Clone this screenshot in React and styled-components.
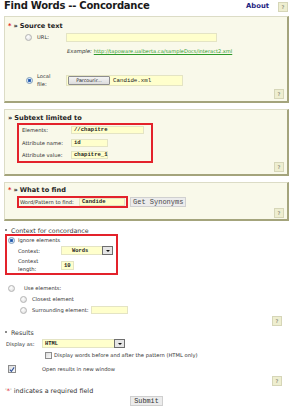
import React from 'react';
import styled, { createGlobalStyle, css } from 'styled-components';

const Global = createGlobalStyle`
  html, body { margin: 0; padding: 0; background: #fff; }
  body {
    width: 300px;
    height: 409px;
    overflow: hidden;
    font-family: "DejaVu Sans", Verdana, sans-serif;
    color: #333;
    -webkit-font-smoothing: antialiased;
  }
  * { box-sizing: border-box; }
`;

const Page = styled.div`
  width: 300px;
  display: flex;
  flex-direction: column;
`;

const Header = styled.header`
  height: 16px;
  display: flex;
  align-items: flex-start;
  padding: 0 12px 0 4px;
`;

const Title = styled.h1`
  margin: 0;
  font-size: 10px;
  line-height: 12px;
  letter-spacing: -0.25px;
  font-weight: bold;
  color: #1a1a1a;
  flex: 1;
  white-space: nowrap;
`;

const About = styled.a`
  font-size: 6.8px;
  line-height: 9px;
  margin-top: 2px;
  font-weight: bold;
  color: #1c1c7e;
  text-decoration: none;
  margin-right: 9px;
`;

const Help = styled.span`
  width: ${p => p.$size || 10}px;
  height: ${p => p.$size || 10}px;
  margin-top: ${p => p.$mt || 0}px;
  display: flex;
  align-items: center;
  justify-content: center;
  background: #eeeed0;
  border: 1px solid #d6d6b8;
  color: #9a9a88;
  font-size: 5px;
  font-weight: bold;
`;

const HelpRow = styled.div`
  display: flex;
  justify-content: flex-end;
  margin-top: ${p => p.$mt || 0}px;
  margin-bottom: ${p => p.$mb || 0}px;
  margin-right: ${p => p.$mr || 0}px;
`;

const Panel = styled.section`
  margin: ${p => p.$mt || 0}px 11px 0 4px;
  background: #f9f9ea;
  border: 1px solid #dcdcc6;
  border-right: 2px solid #a4a47c;
  border-bottom: 2px solid #a4a47c;
  padding: 0 2px 0 3px;
  display: flex;
  flex-direction: column;
`;

const Legend = styled.div`
  height: ${p => p.$h || 11}px;
  margin-top: ${p => p.$mt || 0}px;
  display: flex;
  align-items: center;
  font-size: 6.6px;
  font-weight: bold;
  color: #1e1e1e;
  white-space: nowrap;
`;

const Req = styled.span`
  color: #e02020;
  margin-right: 2px;
`;

const Chevron = styled.span`
  margin-right: 2px;
`;

const Row = styled.div`
  display: flex;
  align-items: center;
  height: ${p => p.$h}px;
  margin-top: ${p => p.$mt || 0}px;
  padding-left: ${p => p.$pl || 0}px;
  white-space: nowrap;
`;

const Label = styled.span`
  width: ${p => p.$w}px;
  flex: none;
  font-size: 5.2px;
  line-height: 8px;
  color: #333;
  white-space: ${p => (p.$wrap ? 'normal' : 'nowrap')};
`;

const Text = styled.span`
  font-size: ${p => p.$fs || 5.2}px;
  color: #333;
`;

const Input = styled.span`
  width: ${p => p.$w}px;
  height: ${p => p.$h || 8}px;
  flex: none;
  display: flex;
  align-items: center;
  padding-left: 2px;
  margin-left: ${p => p.$ml || 0}px;
  background: #ffffcc;
  border: 1px solid #e4e4c4;
  font-family: "Liberation Mono", "Courier New", monospace;
  font-weight: bold;
  font-size: 5.6px;
  color: #222;
`;

const Radio = styled.span`
  width: 7px;
  height: 7px;
  flex: none;
  border-radius: 50%;
  border: 1px solid #b4b4b4;
  background: radial-gradient(circle at 40% 35%, #ffffff 0, #e4e4e4 70%, #cfcfcf 100%);
  margin-left: ${p => p.$ml || 0}px;
  margin-right: ${p => p.$mr || 0}px;
  ${p =>
    p.$checked &&
    css`
      border-color: #7f9db9;
      background: radial-gradient(circle, #1f4f9c 0, #3d72c0 1.4px, #d6e4f6 2px, #f2f6fc 3.5px);
    `}
`;

const Check = styled.span`
  width: ${p => p.$size || 7}px;
  height: ${p => p.$size || 7}px;
  flex: none;
  border: 1px solid #8c8c8c;
  background: linear-gradient(135deg, #dcdcdc, #fbfbfb);
  margin-right: ${p => p.$mr || 0}px;
  display: flex;
  align-items: center;
  justify-content: center;
`;

const Example = styled.span`
  font-size: 5.3px;
  font-style: italic;
  color: #333;
`;

const Link = styled.a`
  font-size: 5.1px;
  color: #2f9a2a;
  text-decoration: underline;
  margin-left: 2px;
`;

const FileBox = styled.span`
  width: 117px;
  height: 11px;
  display: flex;
  align-items: center;
  background: #ffffcc;
  border: 1px solid #e4e4c4;
`;

const FileButton = styled.span`
  height: 9px;
  width: 42px;
  display: flex;
  align-items: center;
  justify-content: center;
  background: linear-gradient(#f4f4f4, #dcdcdc);
  border: 1px solid #8d8d8d;
  border-radius: 1px;
  font-size: 4.8px;
  color: #222;
  margin-left: 1px;
`;

const FileName = styled.span`
  font-family: "Liberation Mono", "Courier New", monospace;
  font-size: 5.8px;
  color: #222;
  margin-left: 3px;
`;

const RedBox = styled.div`
  border: 2px solid #e3222b;
  width: ${p => p.$w}px;
  margin-left: ${p => p.$ml || 0}px;
  margin-top: ${p => p.$mt || 0}px;
  padding: ${p => p.$pad || '0'};
  display: flex;
  flex-direction: ${p => (p.$row ? 'row' : 'column')};
  align-items: ${p => (p.$row ? 'center' : 'stretch')};
`;

const MonoButton = styled.span`
  height: 10px;
  display: flex;
  align-items: center;
  padding: 0 2px;
  margin-left: ${p => p.$ml || 0}px;
  background: #ececec;
  border: 1px solid #d0d0d0;
  font-family: "Liberation Mono", "Courier New", monospace;
  font-size: 7px;
  color: #4a4a4a;
`;

const Select = styled.span`
  width: ${p => p.$w}px;
  height: 9px;
  flex: none;
  display: flex;
  align-items: center;
  justify-content: space-between;
  background: #ffffcc;
  border: 1px solid #e4e4c4;
  font-family: "Liberation Mono", "Courier New", monospace;
  font-weight: bold;
  font-size: 5.4px;
  color: #222;
  padding-left: ${p => p.$pl || 2}px;
`;

const Arrow = styled.span`
  width: 11px;
  height: 9px;
  margin-right: -1px;
  display: flex;
  align-items: center;
  justify-content: center;
  background: #e6e6e6;
  border: 1px solid #6e6e6e;
  &::after {
    content: '';
    border-left: 2px solid transparent;
    border-right: 2px solid transparent;
    border-top: 2px solid #111;
    margin-top: 1px;
  }
`;

const SectionHead = styled.div`
  display: flex;
  align-items: center;
  height: 8px;
  margin-top: ${p => p.$mt || 0}px;
  padding-left: 5px;
  font-size: 6.3px;
  color: #3a3a3a;
`;

const Bullet = styled.span`
  width: 2px;
  height: 2px;
  background: #8a8a8a;
  margin-right: 4px;
`;

const Required = styled.div`
  height: 8px;
  margin-top: 1px;
  padding-left: 5px;
  display: flex;
  align-items: center;
  font-size: 6.4px;
  color: #333;
  white-space: pre;
`;

const Quote = styled.span`
  color: #aaa;
`;

const Star = styled.span`
  color: #e02020;
`;

const SubmitRow = styled.div`
  margin-top: 1px;
  padding-left: 130px;
  display: flex;
`;

const Submit = styled.span`
  height: 10px;
  width: 33px;
  display: flex;
  align-items: center;
  justify-content: center;
  background: #ececec;
  border: 1px solid #cfcfcf;
  font-family: "Liberation Mono", "Courier New", monospace;
  font-size: 6.8px;
  color: #333;
`;

const CheckMark = () => (
  <svg width="7" height="7" viewBox="0 0 7 7">
    <path d="M1 3.6 L2.8 5.6 L6 1" fill="none" stroke="#2c4f9a" strokeWidth="1.2" />
  </svg>
);

export default function App() {
  return (
    <Page>
      <Global />
      <Header>
        <Title>Find Words -- Concordance</Title>
        <About>About</About>
        <Help $size={10} $mt={2}>?</Help>
      </Header>

      <Panel $mt={0}>
        <Legend $mt={3} $h={11}>
          <Req>*</Req>
          <Chevron>»</Chevron>Source text
        </Legend>
        <Row $h={10} $mt={1} $pl={17}>
          <Radio $mr={5} />
          <Label $w={29}>URL:</Label>
          <Input $w={151} $h={9} />
        </Row>
        <Row $h={8} $mt={5} $pl={59}>
          <Example>Example:</Example>
          <Link>http://tapoware.ualberta.ca/sampleDocs/interact2.xml</Link>
        </Row>
        <Row $h={14} $mt={18} $pl={18}>
          <Radio $mr={4} $checked />
          <Label $w={29} $wrap>
            Local
            <br />
            file:
          </Label>
          <FileBox>
            <FileButton>Parcourir...</FileButton>
            <FileName>Candide.xml</FileName>
          </FileBox>
        </Row>
        <HelpRow $mt={2} $mb={2} $mr={1}>
          <Help>?</Help>
        </HelpRow>
      </Panel>

      <Panel $mt={6}>
        <Legend $mt={3} $h={10}>
          <Chevron>»</Chevron>Subtext limited to
        </Legend>
        <RedBox $w={136} $ml={9} $pad="0 0 2px 3px">
          <Row $h={9}>
            <Label $w={49}>Elements:</Label>
            <Input $w={73}>//chapitre</Input>
          </Row>
          <Row $h={9} $mt={4}>
            <Label $w={49}>Attribute name:</Label>
            <Input $w={37}>id</Input>
          </Row>
          <Row $h={9} $mt={3}>
            <Label $w={49}>Attribute value:</Label>
            <Input $w={37}>chapitre_1</Input>
          </Row>
        </RedBox>
        <HelpRow $mt={-1} $mb={2} $mr={1}>
          <Help>?</Help>
        </HelpRow>
      </Panel>

      <Panel $mt={6}>
        <Legend $mt={2} $h={10}>
          <Req>*</Req>
          <Chevron>»</Chevron>What to find
        </Legend>
        <Row $h={15} $mt={-1} $pl={9}>
          <RedBox $w={111} $row $pad="0 0 0 1px">
            <Label $w={59}>Word/Pattern to find:</Label>
            <Input $w={46}>Candide</Input>
          </RedBox>
          <MonoButton $ml={2}>Get Synonyms</MonoButton>
        </Row>
        <HelpRow $mt={-1} $mb={1} $mr={1}>
          <Help>?</Help>
        </HelpRow>
      </Panel>

      <SectionHead $mt={5}>
        <Bullet />
        Context for concordance
      </SectionHead>
      <RedBox $w={113} $ml={5} $pad="0 0 0 1px">
        <Row $h={8}>
          <Radio $checked $mr={3} />
          <Text>Ignore elements</Text>
        </Row>
        <Row $h={9} $mt={2} $pl={10}>
          <Label $w={43}>Context:</Label>
          <Select $w={52} $pl={10}>
            Words
            <Arrow />
          </Select>
        </Row>
        <Row $h={16} $mt={2} $pl={10}>
          <Label $w={43} $wrap>
            Context
            <br />
            length:
          </Label>
          <Input $w={13} $h={9}>10</Input>
        </Row>
      </RedBox>

      <Row $h={8} $mt={9} $pl={8}>
        <Radio $mr={9} />
        <Text>Use elements:</Text>
      </Row>
      <Row $h={8} $mt={3} $pl={20}>
        <Radio $mr={5} />
        <Text>Closest element</Text>
      </Row>
      <Row $h={8} $mt={3} $pl={20}>
        <Radio $mr={5} />
        <Text>Surrounding element:</Text>
        <Input $w={37} $ml={2} />
      </Row>
      <HelpRow $mt={2} $mr={18}>
        <Help>?</Help>
      </HelpRow>

      <SectionHead $mt={2}>
        <Bullet />
        Results
      </SectionHead>
      <Row $h={9} $mt={3} $pl={6}>
        <Label $w={36}>Display as:</Label>
        <Select $w={83}>
          HTML
          <Arrow />
        </Select>
      </Row>
      <Row $h={8} $mt={3} $pl={45}>
        <Check $mr={2} />
        <Text>Display words before and after the pattern (HTML only)</Text>
      </Row>
      <Row $h={8} $mt={6} $pl={8}>
        <Check $size={8} $mr={26}>
          <CheckMark />
        </Check>
        <Text>Open results in new window</Text>
      </Row>
      <HelpRow $mt={3} $mr={18}>
        <Help>?</Help>
      </HelpRow>
      <Required>
        <Quote>'</Quote>
        <Star>*</Star>
        <Quote>'</Quote> indicates a required field
      </Required>
      <SubmitRow>
        <Submit>Submit</Submit>
      </SubmitRow>
    </Page>
  );
}
